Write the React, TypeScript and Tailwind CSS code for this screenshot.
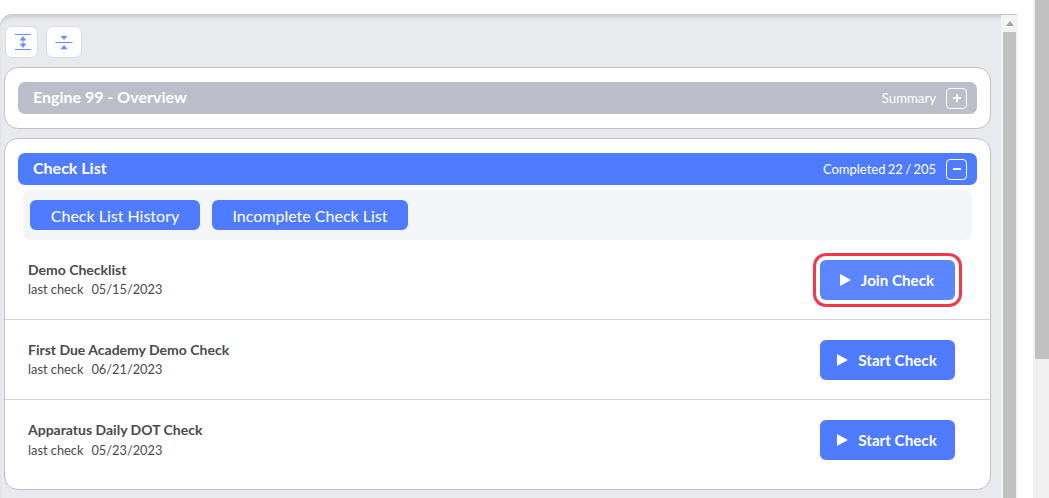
import React from "react";

function ExpandIcon() {
  return (
    <svg width="18" height="18" viewBox="0 0 18 18" fill="none" className="ml-[2px]">
      <path d="M1 1.5H17M1 16.5H17M9 5V13" stroke="#6f8fff" strokeWidth="1" />
      <path d="M5.5 7.5L9 3L12.5 7.5ZM5.5 10.5L9 15L12.5 10.5Z" fill="#6f8fff" />
    </svg>
  );
}

function CollapseIcon() {
  return (
    <svg width="18" height="18" viewBox="0 0 18 18" fill="none">
      <path d="M0.5 9.5H17.5" stroke="#6f8fff" strokeWidth="1.2" />
      <path d="M5.3 2.7H12.7L9 7ZM5.3 16.3H12.7L9 12Z" fill="#6f8fff" />
    </svg>
  );
}

function Play() {
  return (
    <svg width="11" height="12" viewBox="0 0 11 12" className="mt-[-1px] shrink-0">
      <path d="M0 0V12L11 6Z" fill="#fff" />
    </svg>
  );
}

function Header({ title, right, color, sign }: { title: string; right: string; color: string; sign: "plus" | "minus" }) {
  return (
    <div className={`flex h-8 items-center justify-between rounded-[7px] pl-[15px] pr-[10px] text-white ${color}`}>
      <span className="mt-[-2px] text-[16px] font-bold leading-none">{title}</span>
      <div className="flex items-center">
        <span className={`leading-none ${sign === "plus" ? "pt-[2px] text-[13.2px]" : "text-[13px] [word-spacing:-1px]"}`}>{right}</span>
        <span className="ml-[10px] flex h-[21px] w-[21px] items-center justify-center rounded-[4px] border border-white">
          <svg width="10" height="10" viewBox="0 0 10 10">
            {sign === "plus" ? <path d="M5 1V9M1 5H9" stroke="#fff" strokeWidth="2" /> : <path d="M1 5H9" stroke="#fff" strokeWidth="2" />}
          </svg>
        </span>
      </div>
    </div>
  );
}

function Row({ name, date, action, highlight, last }: { name: string; date: string; action: string; highlight?: boolean; last?: boolean }) {
  return (
    <div className={`flex items-center justify-between pl-[23px] pr-[35px] ${last ? "h-[88px] pb-2" : "h-20 border-b border-[#d4d4d6]"}`}>
      <div className="pt-[1px] text-[#4a4a4f]">
        <div className={`text-[14px] font-bold leading-[17px] ${last ? "mb-[3px]" : "mb-[2px]"}`}>{name}</div>
        <div className="text-[12.8px] leading-[19px]">
          last check<span className="ml-2">{date}</span>
        </div>
      </div>
      <button
        className={`flex h-10 w-[135px] items-center justify-center gap-[10px] rounded-[6px] pr-[1px] pt-[1px] text-[15.2px] font-bold text-white ${
          highlight ? "bg-[#5c86ff] outline-[3px] outline-offset-4 outline-[#f0394d]" : "bg-[#4f7cff]"
        }`}
      >
        <Play />
        {action}
      </button>
    </div>
  );
}

function InnerScrollbar() {
  return (
    <div className="flex w-[17px] shrink-0 flex-col bg-[#f4f4f4] pr-[2px]">
      <div className="flex h-[17px] items-center justify-center pl-[2px]">
        <svg width="8" height="5" viewBox="0 0 8 5">
          <path d="M0 5L4 0L8 5Z" fill="#a3a3a3" />
        </svg>
      </div>
      <div className="ml-[2px] flex-1 bg-[#c1c1c1]" />
    </div>
  );
}

export default function App() {
  return (
    <div className="flex h-[498px] w-[1049px] overflow-hidden bg-white font-['Lato',sans-serif]">
      <div className="w-[1033px] shrink-0 pt-[14px]">
        <div className="flex h-[484px] w-[1017px] rounded-tl-[12px] border-t border-r border-[#c4c5ca] bg-[#e9eaee] shadow-[inset_0_4px_4px_-2px_#c8c9cf]">
          <div className="w-[1001px] shrink-0 pl-1 pr-[10px] pt-[11px]">
            <div className="flex gap-2 pl-[1px]">
              <button className="flex h-8 w-[33px] items-center justify-center rounded-[7px] border border-[#dcdde1] bg-white">
                <ExpandIcon />
              </button>
              <button className="flex h-8 w-9 items-center justify-center rounded-[7px] border border-[#dcdde1] bg-white">
                <CollapseIcon />
              </button>
            </div>

            <div className="mt-[9px] h-[62px] rounded-[14px] border border-[#c0c1c6] bg-white px-[13px] pt-[14px]">
              <Header title="Engine 99 - Overview" right="Summary" color="bg-[#bcbfc9]" sign="plus" />
            </div>

            <div className="mt-[9px] h-[352px] rounded-[14px] border border-[#c0c1c6] bg-white pt-[14px]">
              <div className="px-[13px]">
                <Header title="Check List" right="Completed 22 / 205" color="bg-[#4f7cff]" sign="minus" />
                <div className="mx-[5px] mt-[5px] flex h-[50px] items-center gap-3 rounded-[8px] bg-[#f4f5f7] px-[7px]">
                  <button className="h-[30px] w-[170px] rounded-[6px] bg-[#4f7cff] pt-[1px] text-[16px] text-white">Check List History</button>
                  <button className="h-[30px] w-[196px] rounded-[6px] bg-[#4f7cff] pt-[1px] text-[16px] text-white">Incomplete Check List</button>
                </div>
              </div>
              <Row name="Demo Checklist" date="05/15/2023" action="Join Check" highlight />
              <Row name="First Due Academy Demo Check" date="06/21/2023" action="Start Check" />
              <Row name="Apparatus Daily DOT Check" date="05/23/2023" action="Start Check" last />
            </div>
          </div>
          <InnerScrollbar />
        </div>
      </div>
      <div className="h-full w-4 shrink-0 bg-[#f1f1f1] pl-[2px]">
        <div className="h-[359px] bg-[#c1c1c1]" />
      </div>
    </div>
  );
}
